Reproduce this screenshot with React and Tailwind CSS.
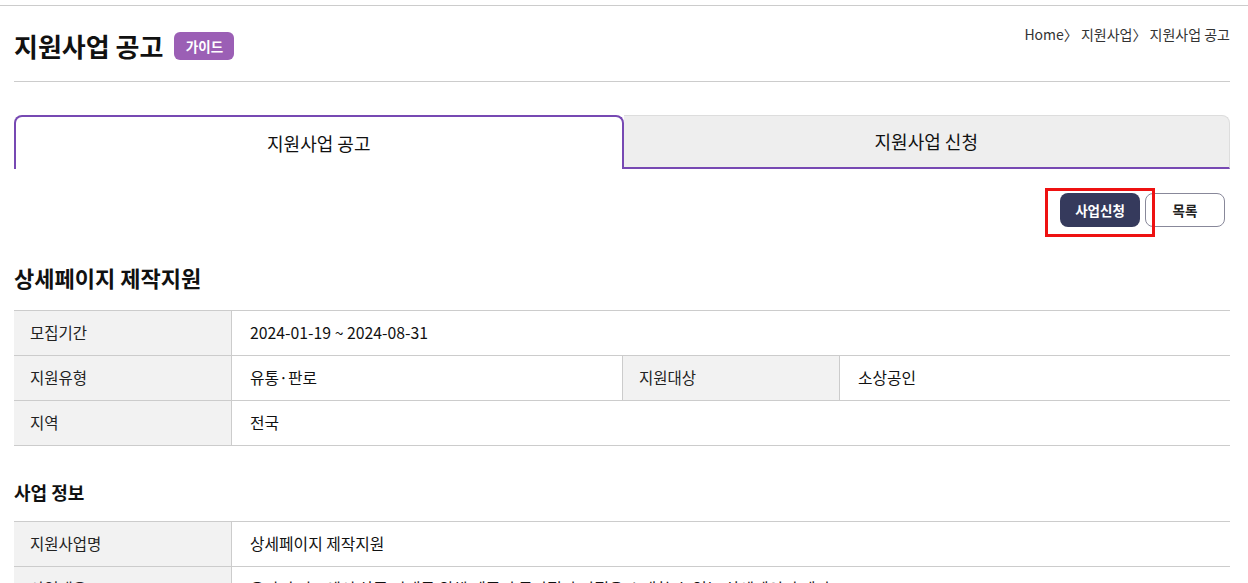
export default function App() {
  const rows = [
    [{ label: "모집기간", value: "2024-01-19 ~ 2024-08-31" }],
    [
      { label: "지원유형", value: "유통·판로" },
      { label: "지원대상", value: "소상공인" },
    ],
    [{ label: "지역", value: "전국" }],
  ];

  const infoRows = [
    [{ label: "지원사업명", value: "상세페이지 제작지원" }],
    [
      {
        label: "사업내용",
        value:
          "온라인 판로에서 상품 판매를 위해 제품의 특장점과 장점을 소개할 수 있는 상세페이지 제작",
      },
    ],
  ];

  const renderTable = (data) => (
    <div className="border-t border-[#cccccc]">
      {data.map((row, i) => (
        <div key={i} className="flex h-[45px] border-b border-[#cccccc]">
          {row.map((cell, j) => (
            <div key={j} className="flex flex-1 min-w-0">
              <div
                className={`w-[218px] shrink-0 bg-[#f2f2f2] border-r border-[#cccccc] flex items-center pl-[16px] text-[15.5px] text-[#222] ${
                  j > 0 ? "border-l" : ""
                }`}
              >
                {cell.label}
              </div>
              <div className="flex-1 flex items-center pl-[18px] text-[15.8px] text-[#111] whitespace-nowrap overflow-hidden">
                {cell.value}
              </div>
            </div>
          ))}
        </div>
      ))}
    </div>
  );

  return (
    <div className="min-h-screen bg-white font-['Noto_Sans_CJK_KR','Noto_Sans',sans-serif] text-[#111] leading-normal">
      <div className="h-[5px]" />
      <div className="border-t border-[#cccccc]" />

      <div className="pl-[14px] pr-[18px]">
        {/* HEADER */}
        <div className="h-[76px] flex justify-between items-start border-b border-[#cccccc]">
          <div className="mt-[24px] flex items-center gap-[11px] h-[32px]">
            <h1 className="text-[26px] font-bold leading-[32px]">
              지원사업 공고
            </h1>
            <span className="h-[28px] w-[60px] rounded-[6px] bg-[#9b5fb5] text-white text-[13.5px] font-bold flex items-center justify-center">
              가이드
            </span>
          </div>
          <div className="mt-[19px] text-[14px] leading-[18px] text-[#333]">
            Home〉 지원사업〉 지원사업 공고
          </div>
        </div>

        {/* TABS */}
        <div className="mt-[33px] flex h-[54px]">
          <div className="flex-1 bg-white border-2 border-b-0 border-[#7749b3] rounded-t-[8px] flex items-center justify-center text-[18px]">
            지원사업 공고
          </div>
          <div className="flex-1 bg-[#eeeeee] border-t border-r border-[#dddddd] border-b-2 border-b-[#7749b3] rounded-tr-[8px] flex items-center justify-center text-[18px]">
            지원사업 신청
          </div>
        </div>

        {/* BUTTONS */}
        <div className="relative mt-[24px] flex justify-end gap-[5px] pr-[5px]">
          <button className="w-[80px] h-[34px] rounded-[8px] bg-[#353a5c] text-white text-[13.5px] font-bold">
            사업신청
          </button>
          <button className="w-[80px] h-[34px] rounded-[8px] bg-white border border-[#88889a] text-[13.5px] font-bold text-[#222]">
            목록
          </button>
          <div className="absolute right-[75px] top-[-5px] w-[110px] h-[49px] border-[3px] border-[#ee1111] pointer-events-none" />
        </div>

        {/* DETAIL */}
        <h2 className="mt-[36px] text-[22px] font-bold leading-[28px]">
          상세페이지 제작지원
        </h2>
        <div className="mt-[19px]">{renderTable(rows)}</div>

        <h3 className="mt-[34px] text-[18px] font-bold leading-[24px]">
          사업 정보
        </h3>
        <div className="mt-[17px]">{renderTable(infoRows)}</div>
      </div>
    </div>
  );
}
